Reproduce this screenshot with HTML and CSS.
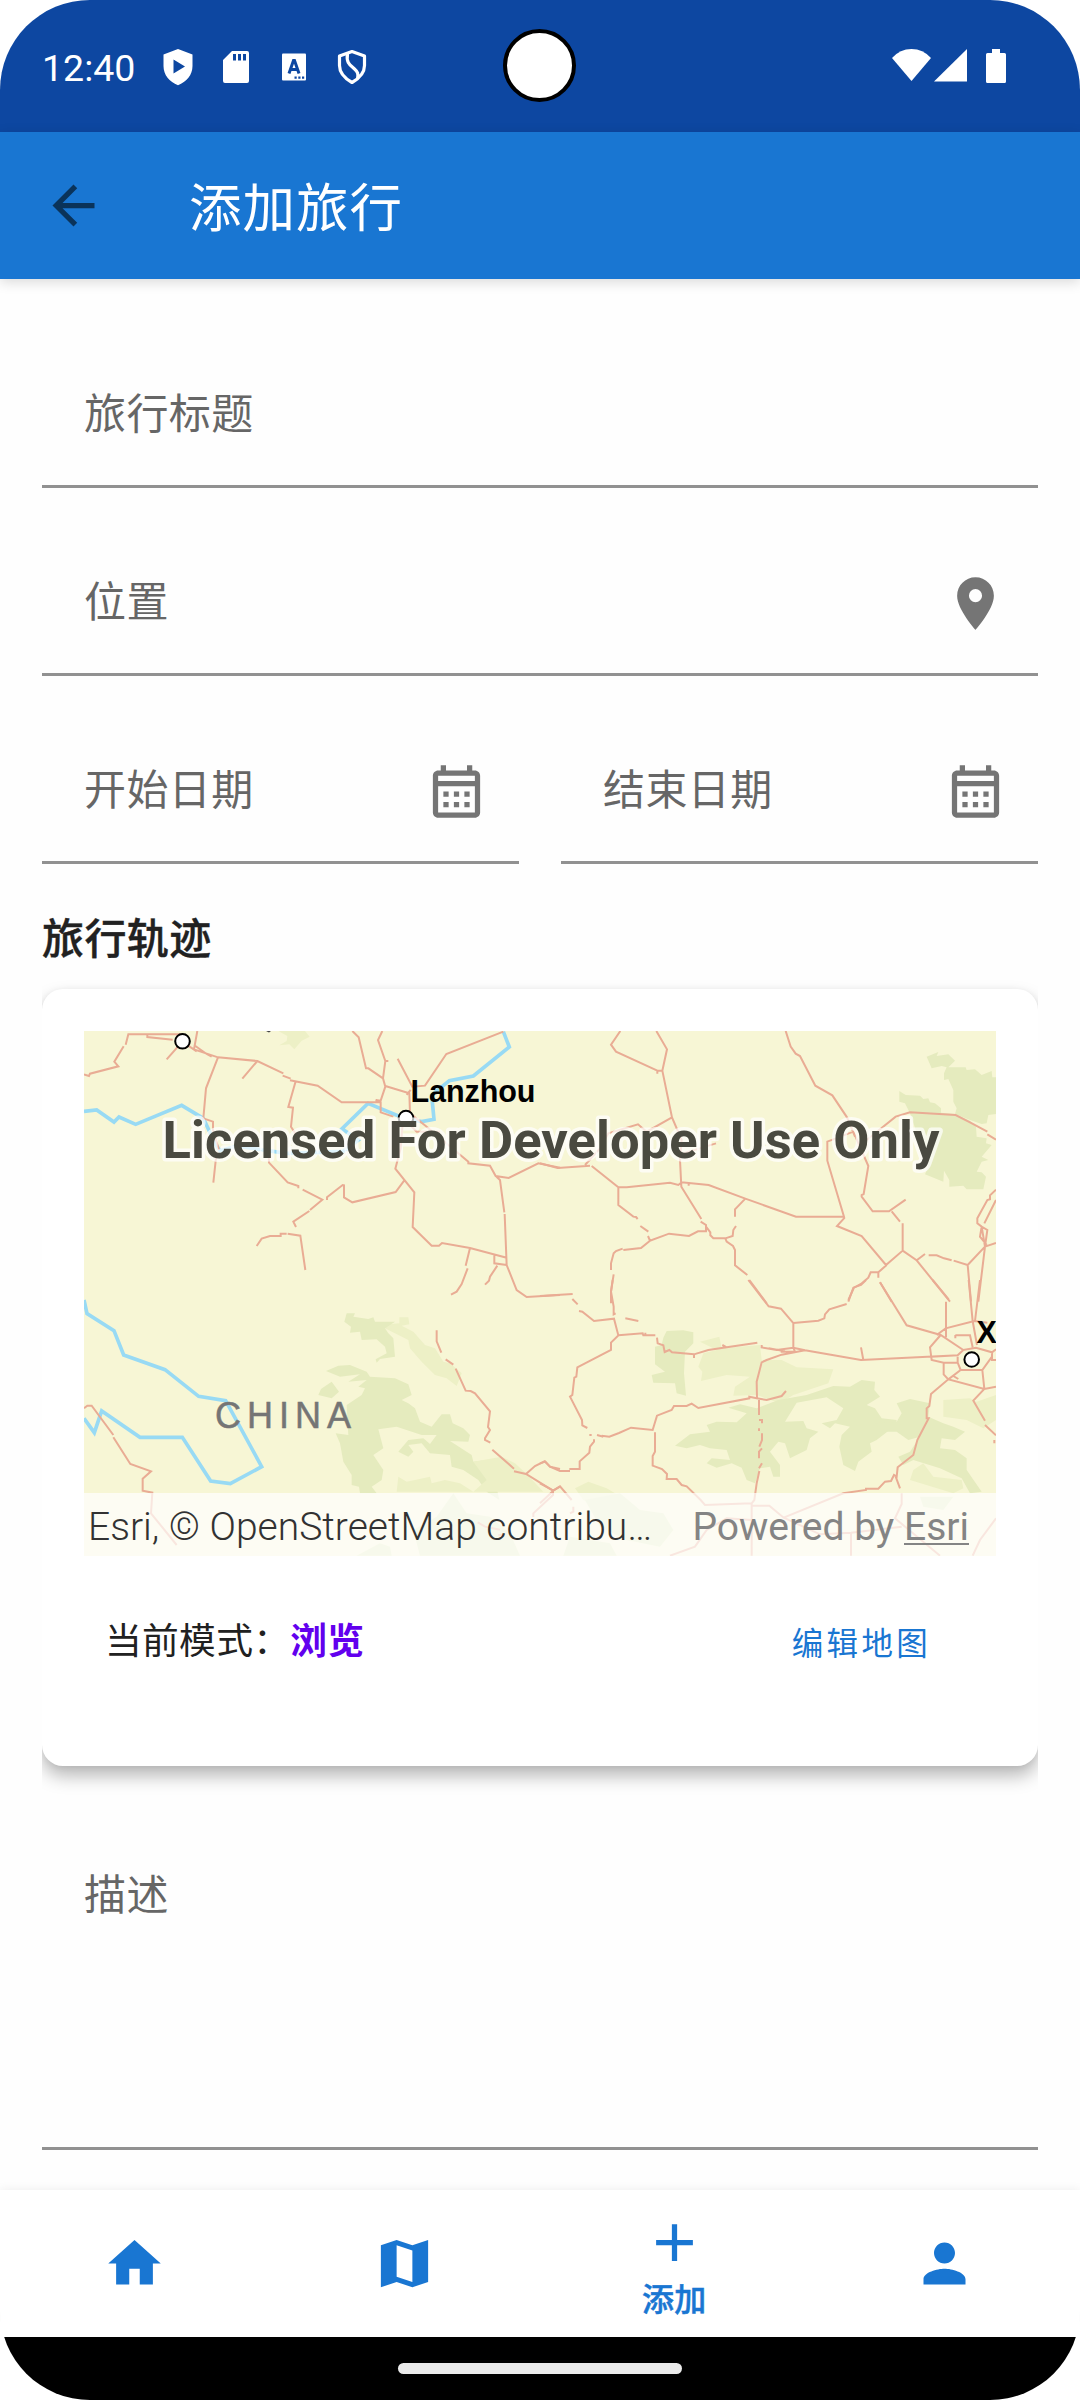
FILE: index.html
```html
<!DOCTYPE html>
<html lang="zh-CN">
<head>
<meta charset="utf-8">
<title>添加旅行</title>
<link rel="stylesheet" href="styles.css">
</head>
<body>
<div class="screen">
  <header class="status-bar">
    <span class="clock">12:40</span>
    <div class="status-icons">
      <svg class="status-icon" viewBox="0 0 38 38"><path fill="#fff" fill-rule="evenodd" d="M19 1 33.500 6.500V18C33.500 27 27.500 34 19 37.200 10.500 34 4.500 27 4.500 18V6.500ZM14.500 11.500V25.500L26 18.500Z"/></svg>
      <svg class="status-icon" viewBox="0 0 38 38"><path fill="#fff" fill-rule="evenodd" d="M15 3H30Q32 3 32 5V33Q32 35 30 35H8Q6 35 6 33V12ZM16 6V12.500H19V6ZM21 6V12.500H24V6ZM26 6V12.500H29V6Z"/></svg>
      <svg class="status-icon" viewBox="0 0 38 38"><path fill="#fff" fill-rule="evenodd" d="M8 5.500H30Q31 5.500 31 6.500V31.500Q31 32.500 30 32.500H8Q7 32.500 7 31.500V6.500Q7 5.500 8 5.500Z"/><path fill="none" stroke="#0d47a1" stroke-width="3" d="M14 25.500 18.500 12.500H19.500L24 25.500M16 21.500H22"/><path fill="#0d47a1" d="M19.500 28.500h2.200v2.200h-2.200zM23.300 28.500h2.200v2.200h-2.200zM27 28.500h2.200v2.200h-2.200z"/></svg>
      <svg class="status-icon" viewBox="0 0 38 38"><path fill="none" stroke="#fff" stroke-width="3.200" stroke-linejoin="round" d="M19 3.500 31.500 8V17.500C31.500 25 26 30.500 19 34.500 12 30.500 6.500 25 6.500 17.500V8ZM14.500 6C13 15 17 17 21 20.500 25 24 25.500 26 24.500 30.500"/></svg>
    </div>
    <div class="system-icons">
      <svg class="wifi" viewBox="0 0 39 32"><path fill="#fff" d="M0 9Q8 0 19.500 0T39 9L19.500 32Z"/></svg>
      <svg class="signal" viewBox="0 0 33 33"><path fill="#fff" d="M33 0V32.500H0Z"/></svg>
      <svg class="battery" viewBox="0 0 20 34"><path fill="#fff" d="M6 0H14V4H18.500Q20 4 20 5.500V32.500Q20 34 18.500 34H1.500Q0 34 0 32.500V5.500Q0 4 1.500 4H6Z"/></svg>
    </div>
    <div class="camera"></div>
  </header>

  <div class="app-bar">
    <svg class="icon back" viewBox="0 0 24 24"><path d="M20 11H7.830l5.590-5.590L12 4l-8 8 8 8 1.410-1.410L7.830 13H20z"/></svg>
    <h1 class="title">添加旅行</h1>
  </div>

  <main class="content">
    <div class="field"><span class="label">旅行标题</span></div>
    <div class="field">
      <span class="label">位置</span>
      <svg class="icon" viewBox="0 0 24 24"><path d="M12 2C8.130 2 5 5.130 5 9c0 5.250 7 13 7 13s7-7.750 7-13c0-3.870-3.130-7-7-7zm0 9.500a2.500 2.500 0 0 1 0-5 2.500 2.500 0 0 1 0 5z"/></svg>
    </div>
    <div class="dates">
      <div class="field">
        <span class="label">开始日期</span>
        <svg class="icon" viewBox="0 0 24 24"><path d="M19 4h-1V2h-2v2H8V2H6v2H5c-1.100 0-2 .900-2 2v14c0 1.100.900 2 2 2h14c1.100 0 2-.900 2-2V6c0-1.100-.900-2-2-2zm0 16H5V10h14zm0-12H5V6h14zM9 14H7v-2h2zm4 0h-2v-2h2zm4 0h-2v-2h2zm-8 4H7v-2h2zm4 0h-2v-2h2zm4 0h-2v-2h2z"/></svg>
      </div>
      <div class="field">
        <span class="label">结束日期</span>
        <svg class="icon" viewBox="0 0 24 24"><path d="M19 4h-1V2h-2v2H8V2H6v2H5c-1.100 0-2 .900-2 2v14c0 1.100.900 2 2 2h14c1.100 0 2-.900 2-2V6c0-1.100-.900-2-2-2zm0 16H5V10h14zm0-12H5V6h14zM9 14H7v-2h2zm4 0h-2v-2h2zm4 0h-2v-2h2zm-8 4H7v-2h2zm4 0h-2v-2h2zm4 0h-2v-2h2z"/></svg>
      </div>
    </div>

    <h2 class="section">旅行轨迹</h2>
    <section class="card">
      <div class="map">
        <svg class="map-canvas" viewBox="84 1031 912 525">
          <!-- woodland -->
          <g transform="translate(60 980) scale(.33333)">
            <path class="wood-light" d="M655 153H735L749 170 725 182 703 208 688 193 658 196 680 183 682 168Z"/>
          </g>
          <g transform="translate(540 980) scale(.33333)">
            <path class="wood" d="M1160 230 1195 216 1190 228 1225 223 1245 242 1225 262 1277 262 1280 270 1305 268 1325 285 1355 273 1357 292H1368V402L1345 405 1340 430 1325 432 1290 420 1245 402 1250 385 1275 378 1265 388 1250 385 1240 365V330L1225 297 1212 300V280L1220 262 1205 258 1175 265Z"/>
            <path class="wood" d="M1078 333 1097 345 1140 347 1150 357 1165 355 1170 367 1185 370 1203 385V398L1245 402 1290 422 1308 440 1310 470 1340 475 1338 490 1355 495 1325 530 1345 540 1325 545 1310 575 1325 577 1338 590 1330 628 1280 628 1270 617 1228 620V600L1212 572 1210 605 1155 583 1165 560 1110 400 1095 370 1078 365Z"/>
          </g>
          <g transform="translate(60 1280) scale(.33333)">
            <path class="wood-light" d="M1018 112H1045L1048 133 1025 137 1060 155 1095 195 1125 205 1150 245 1170 250 1205 280 1190 318 1160 295 1125 285 1085 245 1050 205 1045 180 975 145 985 133 1018 130Z"/>
            <path class="wood" d="M860 100H885L880 110 925 117 940 112 945 125 1005 125 975 145 985 160 1000 175 1005 230 960 237 950 248 947 238 980 220 975 200 950 178 905 180 900 155 870 158 873 140 853 125Z"/>
            <path class="wood" d="M798 273 835 257 870 255 920 275 930 290 1005 295 1045 313 1055 345 1025 360 1045 370 1065 385 1080 425 1115 440 1145 403 1170 403 1178 430 1210 445 1230 465 1225 485 1170 483 1235 525 1240 545 1280 540 1310 570 1305 600 1318 660 1280 635 1255 600 1210 570 1175 560 1170 525 1110 520 1085 490 1045 495 1060 515 1045 530 1015 515 1045 480 1090 475 1110 492 1130 465 1085 465 1010 440 955 448 970 505 940 525 970 570 965 600 935 620 950 640H900L897 620 875 615V585L850 545 840 490 827 460 865 465 860 375 905 345 915 325 895 320 920 300 865 305 900 283 840 290Z"/>
            <path class="wood" d="M775 345 783 327 815 305 837 335 815 355ZM890 827 960 790 990 800 995 827Z"/>
            <path class="wood-light" d="M1240 545 1325 530 1365 550 1400 582 1450 635H1010L1015 590 1040 605 1110 590 1115 610 1155 600 1200 610 1240 635 1280 600Z"/>
            <path class="wood" d="M1060 750 1130 710 1180 640 1220 700 1290 710 1350 760 1380 827H1080Z"/>
          </g>
          <g transform="translate(540 1280) scale(.33333)">
            <path class="wood" d="M370 173 380 153 430 151 460 157V190L435 215 432 280 438 347 410 340 405 310 340 308 335 285 375 275 345 253V200L365 195Z"/>
            <path class="wood-light" d="M480 185 538 170 545 205 660 195 665 240 725 240 770 262 880 268 865 310 760 345 720 370 650 345 580 347 585 320 630 290 560 285 483 303 487 275 475 260 490 220 530 210Z"/>
            <path class="wood" d="M715 360 800 345 880 318 930 320 965 300 1005 305 1003 330 1020 350 980 375 1005 385 1025 415 1070 420 1068 435 1010 480 990 490 995 515 955 545 945 573 910 555 898 500 905 465 930 440 885 430 870 445 845 430 890 420 910 385 860 352 770 368 735 425 790 423 800 445 835 455 810 475 800 510 750 535 735 490 715 485 690 515 720 555 720 590 700 590 690 560 660 565 645 610 620 600 605 563 575 550 530 563 500 550 515 535 570 540 560 510 510 505 480 495 440 505 405 497 450 463 510 455 500 435 530 425 590 427 620 400 565 383 600 373 650 385Z"/>
            <path class="wood" d="M1070 370 1110 357 1170 370 1165 410 1210 430 1240 440 1275 455 1245 480 1205 475 1200 505 1245 510 1280 535 1280 570 1325 635 1290 640 1265 595 1200 565 1120 540 1090 555 1075 530 1110 515 1140 470 1105 480 1070 455 1025 455 1005 430 1070 425 1085 400Z"/>
            <path class="wood-light" d="M1210 360 1290 355 1310 365 1368 345V420L1330 445 1280 420 1210 410ZM1120 570 1150 550 1180 590 1265 600 1270 625 1240 640 1110 600ZM105 625 145 605 200 625 250 655 200 700 130 660Z"/>
            <path class="wood" d="M135 660 240 640 300 690 370 700 400 750 360 800 260 780 180 740ZM1140 650 1240 650 1210 690 1150 680ZM70 827 90 770 210 790 230 827Z"/>
          </g>

          <!-- rivers -->
          <g class="river">
            <path transform="translate(60 980) scale(.33333)" d="M72 394 110 390 162 426 177 411 227 433 365 376 430 415 465 490 480 512 530 498 680 520 850 514 895 480 846 446 924 370 1030 414 1085 425 1122 418 1115 345 1168 302 1240 288 1348 201 1330 155"/>
            <path transform="translate(60 1280) scale(.33333)" d="M72 60 81 101 162 152 191 225 315 269 416 349 497 362 605 560 511 611 452 603 367 472H240L125 393 103 458 72 415"/>
          </g>

          <!-- roads -->
          <g class="road">
            <path transform="translate(60 980) scale(.33333)" d="M72 283 87 288 90 281 175 259 163 245 191 199M175 259 155 264M197 194 205 163H367M262 163V171L338 179M320 238 367 185 410 214M412 153 402 208 474 232 592 243 670 280M402 195 440 222 455 230M547 296 592 243M474 232 438 325 430 415 459 425V450L477 510M470 515 460 608M668 287 692 296M690 301 773 317 845 367H960M707 304 685 381 699 383 693 440 715 475M625 500 627 548 683 607 715 618V625M728 629 787 659 750 690M748 693 700 725 708 741M590 798 605 776 630 768H662V761H680M683 761 721 767 736 870M801 660V652L848 615 852 616V652L877 667 1007 636 1033 601M877 153 896 172 918 265 925 265 969 295M967 153 954 180 976 243H985M976 243 969 295 976 320 962 362 947 360 962 367V397L1000 410M976 318 1048 340 1050 400 1100 440 1225 545V550L1290 557 1307 588 1346 594 1435 550 1500 563M1013 236 1057 320 1095 317 1159 222 1330 155M1040 425 1070 455 1140 455M1040 345 1052 330M1028 430 1022 505 1006 566 1063 637 1058 741 1115 797H1137L1146 789 1230 804 1340 833M1303 825V850L1340 855M1230 804 1217 857M1223 865 1205 912 1190 935 1173 944M1307 588 1320 600 1333 697M1334 702 1340 855 1370 930 1400 951 1500 945M1312 857 1290 890 1287 902 1275 914"/>
            <path transform="translate(540 980) scale(.33333)" d="M241 153 213 194 228 215 352 272V281M352 272H367L381 208 349 153M367 272 396 412 425 480 420 540 424 620 484 717M396 412 320 455 294 433 205 460 180 505 135 555M0 550 53 564 150 557M155 558 235 622H260L390 608 415 615 425 607 506 615 616 656 768 710H912L862 542V485L940 455 985 558 971 642 965 645V650L998 694H1047L1097 659M430 520 528 490M446 608V617M235 622V675L280 710 288 711 293 717M301 738 325 755M324 768 330 782 387 761 447 768 474 754H498V735L482 725M498 740 511 757V766L520 775H556L578 768 580 750 588 738M616 656 585 688V710M556 775 560 785 579 798 585 810V856L622 885M628 900 680 970M737 153 752 200 767 221 780 228 826 317 877 346 921 412 945 470M980 480 1067 410 1110 397 1247 405 1290 427 1342 455M1342 463 1368 479M1055 694 1080 725M1088 730V812L1038 855 965 768 891 738 914 713M330 782 303 804 250 810M248 806 228 813 221 820 213 850V870M221 883 213 935V970M1040 855 1015 877H992L985 893 963 912 942 923 925 960M1015 877V893M1020 907 1055 965M1088 812 1130 841 1155 822M1130 841 1230 965M1166 826H1190L1212 835 1235 841M1241 842 1283 855 1293 965M1283 855 1335 800 1315 965M1335 800 1368 789M1335 800 1325 740 1342 750ZM1325 740 1312 730V715L1342 660 1350 658V646L1368 629M1333 730 1368 660M1325 740 1320 770 1340 795M0 948 98 942"/>
            <path transform="translate(60 1280) scale(.33333)" d="M72 385 82 377H95L160 465M160 472 211 552 273 574 248 596V632L277 638 273 700 350 795M1130 151V184L1144 218M1157 238 1180 254M1187 266 1217 332 1232 333 1245 340 1290 394 1284 441 1290 450 1275 475V480L1291 488M1297 509 1362 566M1362 574 1398 582 1479 632V645L1420 700V711M1398 582 1425 558 1454 544 1470 560 1500 567M1479 632 1500 620M1253 727 1275 740 1320 749M1315 765H1330"/>
            <path transform="translate(540 1280) scale(.33333)" d="M97 57 113 73M117 93 127 95 162 123 222 116 235 166 213 188V210L112 262 109 290 103 293 97 345 90 350 126 420 127 436 142 444M218 0 213 35 221 80V103L227 100M256 115 295 123M235 166 308 160 310 166H346M316 158V166M351 173 353 190 370 196 374 216 388 210 396 217 462 223 505 210 550 203 652 188M462 223V234M547 195 560 202M665 195V202L710 210 760 203 795 211 963 240 1255 226M625 0 686 79 723 86 760 129V203L765 215H722M686 205 735 214M760 129 835 122 853 115 855 103 868 88 920 72M925 65 940 23 963 15 978 0M963 202 970 240M795 211 725 224 680 240 665 247 650 305 651 355M738 333 725 348 680 360 650 355 628 350V355L475 384 455 371 440 378H402L395 390 351 407 338 450 273 443 237 459 208 470 185 467M148 465H155M171 465 190 470M657 360V405M657 420H666V430M657 445V453M666 460V480L658 500M666 505 657 515V535M666 550 657 565M658 573 650 610 643 660 635 670 635 827M0 550 16 545 30 560 60 573H90M88 567H119V544L148 518 150 500 162 485V478M345 457V515L338 528V557L366 567 381 582 380 597H410L425 615 440 619 482 660 495 675 635 670M635 677H688L731 713 910 640 978 630V626H1015L1035 605 1053 603 1062 585 1070 590 1073 562 1120 525 1132 480 1166 415H1160V385L1168 378 1173 342 1225 298 1333 327 1368 320M1067 590 1080 625M731 713 840 763 933 758 1085 740M635 720 560 715 500 750 465 800 390 827M933 758V827M1085 640V672L1065 715 1200 827M0 610 40 632 60 619 95 660M40 632 0 670M100 680V695L90 700M1020 7 1100 136 1202 165 1270 210 1308 203 1356 217 1368 208M1178 0 1226 58M1218 65V172M1190 165 1217 145 1303 123 1342 128M1286 0 1298 123 1311 195M1320 0 1305 123M1246 165V175M1246 166H1290L1298 202M1202 165 1170 202 1175 240 1211 248H1253M1173 230 1253 226 1270 210M1211 248V283L1225 298 1262 270H1327L1356 230M1253 230V248L1262 270M1327 270 1333 327 1300 362 1335 422M1335 435 1368 466M1240 288 1255 297M1356 217V240H1368M1363 480V490M1368 715 1320 780 1298 827"/>
          </g>

          <!-- places -->
          <path fill="#444" d="M266 1031h5l-2 1.500z"/>
          <g class="city"><circle cx="182.500" cy="1041.300" r="7.300"/><circle cx="406" cy="1118" r="7.300"/><circle cx="971.700" cy="1359.500" r="7.300"/></g>
          <text class="place" x="410.500" y="1102" textLength="125">Lanzhou</text>
          <text class="place" x="976.500" y="1343">X</text>
          <text class="country" x="215" y="1427.500" textLength="136">CHINA</text>
          <text class="watermark" x="162.500" y="1158.300" textLength="777">Licensed For Developer Use Only</text>
        </svg>
        <div class="attribution">
          <span class="sources">Esri, © OpenStreetMap contribu…</span>
          <span class="powered">Powered by <u>Esri</u></span>
        </div>
      </div>
      <div class="mode-row">
        <span class="mode">当前模式：<b>浏览</b></span>
        <span class="edit">编辑地图</span>
      </div>
    </section>

    <div class="field description"><span class="label">描述</span></div>
  </main>

  <nav class="bottom-nav">
    <div class="nav-item"><svg class="icon" viewBox="0 0 24 24"><path d="M10 20v-6h4v6h5v-8h3L12 3 2 12h3v8z"/></svg></div>
    <div class="nav-item"><svg class="icon" viewBox="0 0 24 24"><path fill-rule="evenodd" d="M3 5 9 3 15 5 21 3V19L15 21 9 19 3 21ZM9 5V17L15 19V7Z"/></svg></div>
    <div class="nav-item active"><svg class="icon" viewBox="0 0 24 24"><path d="M19 13h-6v6h-2v-6H5v-2h6V5h2v6h6z"/></svg><span>添加</span></div>
    <div class="nav-item"><svg class="icon" viewBox="0 0 24 24"><path d="M12 12c2.210 0 4-1.790 4-4s-1.790-4-4-4-4 1.790-4 4 1.790 4 4 4zm0 2c-2.670 0-8 1.340-8 4v2h16v-2c0-2.660-5.330-4-8-4z"/></svg></div>
  </nav>
  <footer class="gesture-bar"><div class="handle"></div></footer>
</div>
</body>
</html>
```
FILE: styles.css
```css
* { box-sizing: border-box; }

body {
  margin: 0;
  background: #fff;
  font-family: "Noto Sans CJK SC", sans-serif;
}

.screen {
  width: 1080px;
  height: 2400px;
  display: flex;
  flex-direction: column;
  overflow: hidden;
  border-radius: 90px;
  background: #fefefe;
}

.icon { width: 63px; height: 63px; flex: none; fill: #757575; display: block; }

/* Status bar */
.status-bar {
  position: relative;
  height: 132px;
  flex: none;
  display: flex;
  align-items: center;
  padding: 2px 74px 0 42px;
  background: #0d47a1;
}
.clock { width: 117px; padding-top: 2px; font: 37.500px/44px Roboto, sans-serif; color: #fff; }
.status-icons { display: flex; gap: 20px; }
.status-icon { width: 38px; height: 38px; display: block; }
.system-icons { display: flex; align-items: flex-start; margin-left: auto; margin-top: -2px; }
.system-icons svg { display: block; }
.wifi { width: 39px; height: 32px; }
.signal { width: 33px; height: 33px; margin-left: 3px; }
.battery { width: 20px; height: 34px; margin-left: 19px; }
.camera {
  position: absolute;
  left: 503px;
  top: 29px;
  width: 73px;
  height: 73px;
  border: 4.500px solid #000;
  border-radius: 50%;
  background: #fff;
}

/* App bar */
.app-bar {
  height: 147px;
  flex: none;
  display: flex;
  align-items: center;
  padding-left: 42px;
  background: #1976d2;
  box-shadow: 0 3px 12px rgba(0, 0, 0, .15);
  z-index: 1;
}
.back { fill: #0a335a; }
.title { margin: 0 0 3px 84px; font-size: 52.500px; line-height: 76px; letter-spacing: 1px; font-weight: 400; color: #fff; }

/* Form */
.content { flex: 1; min-height: 0; padding: 62px 42px 0; display: flex; flex-direction: column; }
.field {
  height: 147px;
  flex: none;
  display: flex;
  align-items: center;
  justify-content: space-between;
  margin-bottom: 41px;
  padding: 3px 31px 0 42px;
  border-bottom: 3px solid #919191;
}
.field .icon { margin-top: 2px; }
.label { font-size: 42px; line-height: 60px; letter-spacing: .400px; margin-bottom: 8px; color: #666; }
.dates { display: grid; grid-template-columns: 1fr 1fr; gap: 42px; }
.section { margin: 1px 0 23px; font-size: 42px; line-height: 60px; letter-spacing: .400px; font-weight: 500; color: #212121; -webkit-text-stroke: .400px #212121; }

.card {
  height: 777px;
  flex: none;
  margin-bottom: 41px;
  padding: 42px;
  border-radius: 21px;
  background: #fff;
  box-shadow: 0 10px 18px rgba(0, 0, 0, .28), 0 1px 6px rgba(0, 0, 0, .06);
  clip-path: inset(-20px 0 -40px 0);
}
.map { position: relative; height: 525px; background: #f7f6d5; overflow: hidden; }
.map-canvas { display: block; width: 912px; height: 525px; }
.wood { fill: #e5ebbe; }
.wood-light { fill: #edf0c6; }
.river path { fill: none; stroke: #98daf4; stroke-width: 11; }
.road path { fill: none; stroke: #e9ac94; stroke-width: 6; }
.city circle { fill: #fff; stroke: #000; stroke-width: 2; }
.place { font: bold 30.500px "Liberation Sans", sans-serif; fill: #000; }
.country { font: 36px "Liberation Sans", sans-serif; fill: #757575; stroke: #757575; stroke-width: .500px; }
.watermark {
  font: bold 52.500px Roboto, sans-serif;
  fill: #4a4a40;
  stroke: rgba(255, 255, 255, .7);
  stroke-width: 7px;
  stroke-linejoin: round;
  paint-order: stroke;
}
.attribution {
  position: absolute;
  left: 0;
  right: 0;
  bottom: 0;
  height: 63px;
  display: flex;
  align-items: center;
  justify-content: space-between;
  padding: 4px 27px 0 4px;
  background: rgba(255, 255, 255, .7);
  font: 39px/46px Roboto, sans-serif;
  white-space: nowrap;
}
.sources { font-weight: 300; color: #323232; }
.powered { color: #848484; }
.powered u { text-decoration-thickness: 2px; text-underline-offset: 3px; }

.mode-row { display: flex; align-items: center; justify-content: space-between; padding: 52px 65px 0 21px; }
.mode { font-size: 36.750px; line-height: 54px; letter-spacing: .300px; color: #212121; }
.mode b { font-weight: 700; color: #6200ee; }
.edit { font-size: 31.500px; line-height: 54px; letter-spacing: 3.300px; margin-top: 6px; color: #1976d2; }

.description { height: 343px; align-items: flex-start; padding-top: 55px; margin: 0; }

/* Bottom navigation */
.bottom-nav {
  height: 147px;
  flex: none;
  display: grid;
  grid-template-columns: repeat(4, 1fr);
  padding-right: 1px;
  background: #fff;
  box-shadow: 0 0 10px rgba(0, 0, 0, .07);
  z-index: 1;
}
.nav-item { display: flex; flex-direction: column; align-items: center; justify-content: center; }
.nav-item .icon { fill: #1976d2; }
.nav-item.active { justify-content: flex-start; padding-top: 21px; }
.nav-item span { font-size: 32px; line-height: 46px; letter-spacing: .300px; font-weight: 500; color: #1976d2; -webkit-text-stroke: .500px #1976d2; }

.gesture-bar { height: 63px; flex: none; background: #000; display: flex; justify-content: center; padding-top: 26px; z-index: 2; }
.handle { width: 284px; height: 11px; border-radius: 5.500px; background: #ebebeb; }
```
